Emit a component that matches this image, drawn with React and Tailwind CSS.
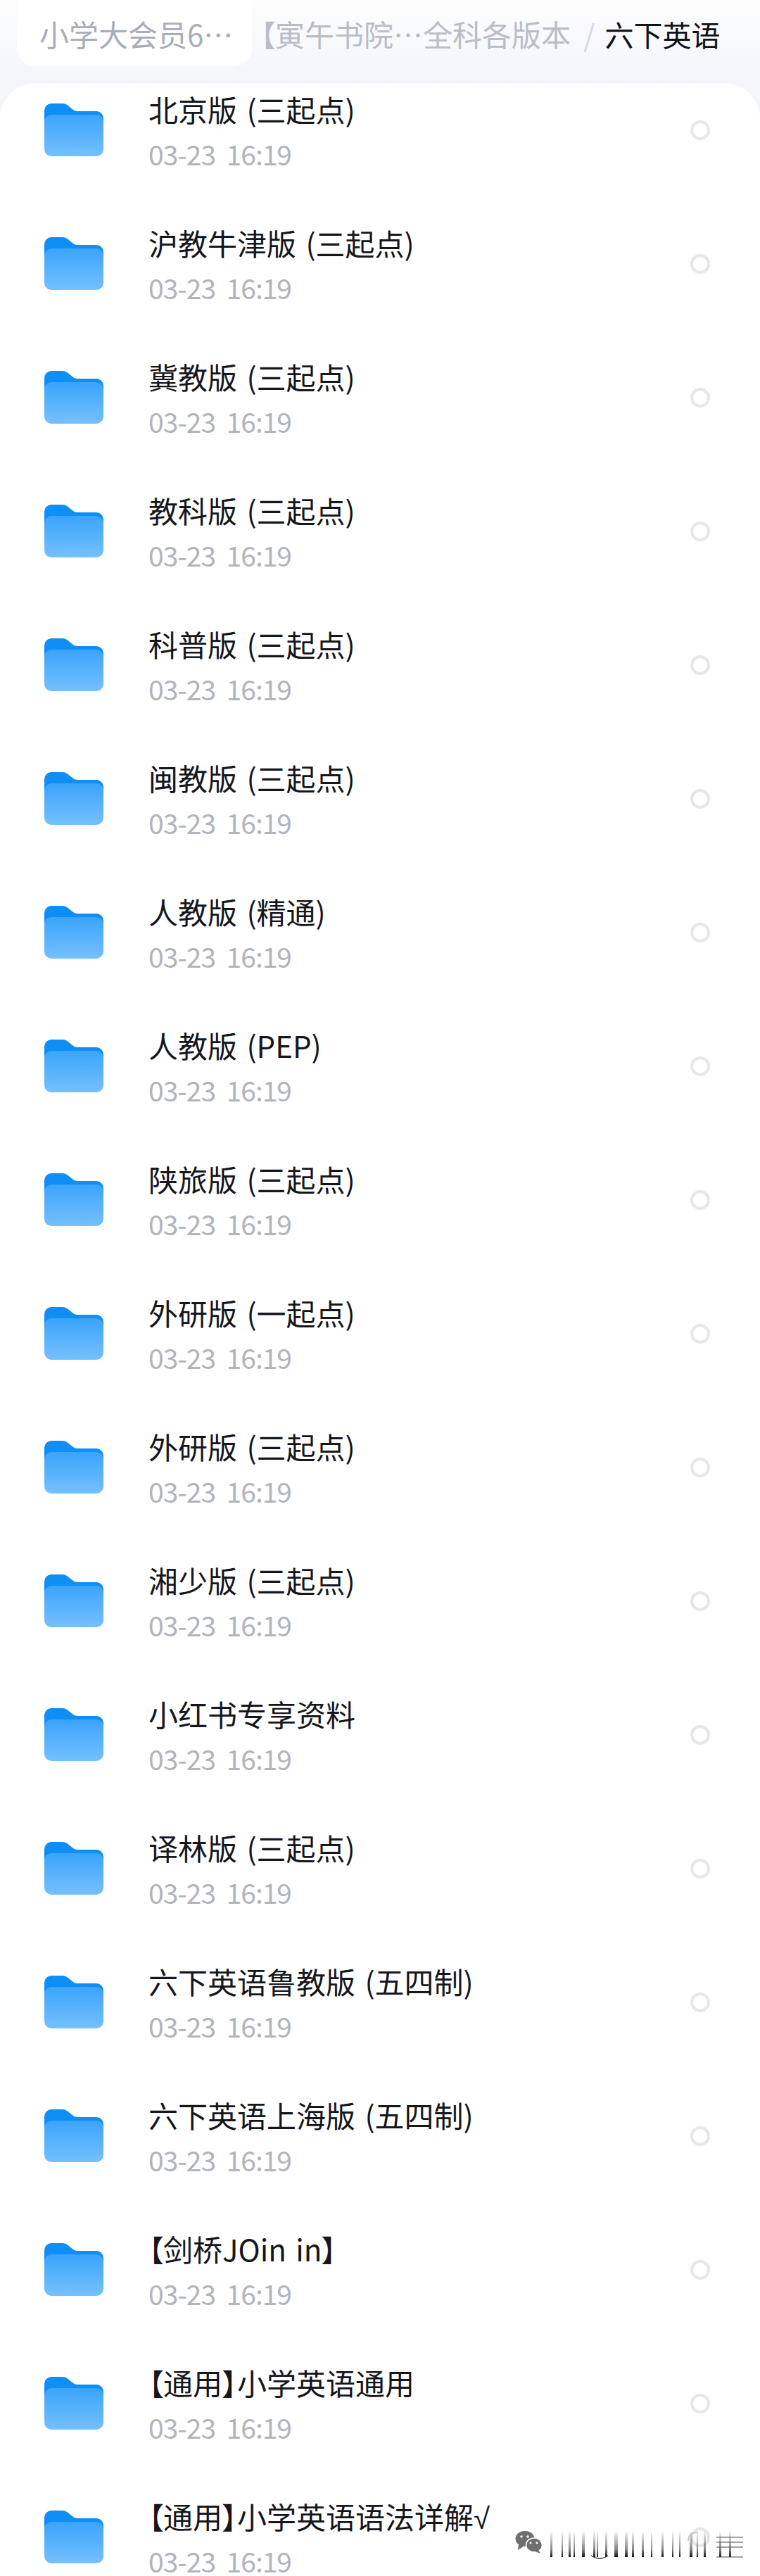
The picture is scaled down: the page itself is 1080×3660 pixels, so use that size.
const folders = [
  '北京版 (三起点)',
  '沪教牛津版 (三起点)',
  '冀教版 (三起点)',
  '教科版 (三起点)',
  '科普版 (三起点)',
  '闽教版 (三起点)',
  '人教版 (精通)',
  '人教版 (PEP)',
  '陕旅版 (三起点)',
  '外研版 (一起点)',
  '外研版 (三起点)',
  '湘少版 (三起点)',
  '小红书专享资料',
  '译林版 (三起点)',
  '六下英语鲁教版 (五四制)',
  '六下英语上海版 (五四制)',
  '【剑桥JOin in】',
  '【通用】小学英语通用',
  <>
    【通用】小学英语语法详解<span className="font-['Liberation_Sans']">√</span>
  </>,
]

const streaks = [
  [782, 3], [798, 2], [808, 3], [815, 2], [827, 4], [843, 3], [848, 2], [860, 3], [873, 5], [888, 4], [898, 3],
  [912, 3], [925, 2], [940, 3], [955, 2], [965, 2], [980, 4], [990, 2], [1000, 3], [1022, 3], [1036, 3],
]

function FolderIcon() {
  return (
    <svg width="86" height="78" viewBox="0 0 86 78" className="shrink-0">
      <defs>
        <linearGradient id="folderFront" x1="0" y1="0" x2="0" y2="1">
          <stop offset="0" stopColor="#3ba4fb" />
          <stop offset="1" stopColor="#75c0fd" />
        </linearGradient>
      </defs>
      <path
        d="M1 12a10 10 0 0 1 10-10h15c5 0 8 2 11 5l5 4c2 1 3 2 6 2h27a10 10 0 0 1 10 10v10H1z"
        fill="#0f8ef5"
      />
      <rect x="1" y="18" width="84" height="59" rx="10" fill="url(#folderFront)" />
    </svg>
  )
}

function FolderRow({ name }) {
  return (
    <div className="flex h-[190px] items-start pl-[62px] pr-[71px]">
      <div className="mt-[27px]">
        <FolderIcon />
      </div>
      <div className="ml-[63px] flex-1">
        <div className="mt-[7px] h-[60px] text-[42px] leading-[60px] text-[#15171c] [font-feature-settings:'palt'] [word-spacing:4px]">
          {name}
        </div>
        <div className="mt-[11px] text-[39px] leading-[44px] tracking-[-1px] whitespace-pre text-[#b1b4bb]">
          03-23  16:19
        </div>
      </div>
      <div className="mt-[53px] h-[28px] w-[28px] rounded-full border-[4px] border-[#e6e7e9]" />
    </div>
  )
}

function Watermark() {
  return (
    <div className="absolute left-[728px] top-[3590px] flex items-center">
      <svg width="345" height="56" viewBox="728 3590 345 56">
        <defs>
          <linearGradient id="streak" x1="0" y1="0" x2="0" y2="1">
            <stop offset="0" stopColor="#333" stopOpacity="0.05" />
            <stop offset="0.7" stopColor="#333" stopOpacity="0.6" />
            <stop offset="1" stopColor="#111" stopOpacity="1" />
          </linearGradient>
        </defs>
        <ellipse cx="746" cy="3607" rx="13.5" ry="11" fill="#6e6e6e" />
        <path d="M737 3615l-1 8 8-5z" fill="#6e6e6e" />
        <ellipse cx="759" cy="3616" rx="11.5" ry="10" fill="#6e6e6e" stroke="#fff" strokeWidth="1.5" />
        <path d="M765 3623l3 5-8-3z" fill="#6e6e6e" />
        <circle cx="741" cy="3604" r="1.7" fill="#fff" />
        <circle cx="750" cy="3604" r="1.7" fill="#fff" />
        <circle cx="754" cy="3613" r="1.5" fill="#fff" />
        <circle cx="763" cy="3613" r="1.5" fill="#fff" />
        {streaks.map(([x, w]) => (
          <rect key={x} x={x} y="3597" width={w} height="36" fill="url(#streak)" />
        ))}
        <path d="M840 3631q12 8 24 0" fill="none" stroke="#333" strokeWidth="1.5" />
        <path d="M992 3598q-14 0-14 12" fill="none" stroke="#ccc" strokeWidth="2" />
        <path d="M1018 3605h38M1018 3612h38M1018 3619h38M1018 3633h38" stroke="#555" strokeWidth="1.5" opacity="0.7" />
      </svg>
    </div>
  )
}

export default function App() {
  return (
    <div
      className="relative h-[3660px] w-[1080px] overflow-hidden bg-gradient-to-b from-[#fdfdfe] to-[#f3f5f9] to-[120px]"
      style={{ fontFamily: '"Noto Sans CJK SC", "Noto Sans", sans-serif' }}
    >
      {/* breadcrumb */}
      <div className="flex h-[118px] items-start whitespace-nowrap text-[42px] leading-[96px]">
        <div className="ml-[24px] h-[94px] w-[334px] shrink-0 rounded-b-[26px] bg-white pl-[32px] text-[#a9adb8] [font-feature-settings:'palt']">
          小学大会员6…
        </div>
        <div className="ml-[12px] text-[#b9bdc7] [font-feature-settings:'palt']">【寅午书院…全科各版本</div>
        <div className="ml-[18px] text-[#d5d8de]">/</div>
        <div className="ml-[14px] text-[41px] text-[#111318]">六下英语</div>
      </div>

      {/* file list */}
      <div className="rounded-t-[50px] bg-white">
        {folders.map((name, i) => (
          <FolderRow key={i} name={name} />
        ))}
      </div>

      <Watermark />
    </div>
  )
}
